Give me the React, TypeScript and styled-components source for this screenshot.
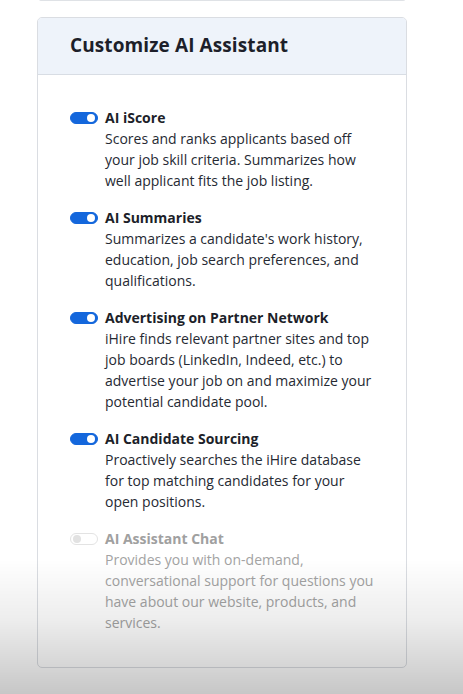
import React from "react"
import styled, { createGlobalStyle } from "styled-components"

const GlobalStyle = createGlobalStyle`
  html, body {
    margin: 0;
    padding: 0;
    background: #ffffff;
    font-family: "Open Sans", "Noto Sans", Arial, sans-serif;
  }
`

const Page = styled.div`
  width: 463px;
  height: 694px;
  overflow: hidden;
  padding-left: 37px;
  box-sizing: border-box;
`

const PrevCard = styled.div`
  width: 364px;
  height: 1px;
  margin-left: 2px;
  margin-top: -1px;
  border: 1px solid #dfe2e6;
  border-top: none;
  border-radius: 0 0 5px 5px;
`

const Card = styled.section`
  width: 370px;
  margin-top: 16px;
  box-sizing: border-box;
  border: 1px solid #dadde2;
  border-radius: 5px;
  overflow: hidden;
  background: #ffffff;
`

const CardHeader = styled.header`
  height: 57px;
  box-sizing: border-box;
  display: flex;
  align-items: center;
  padding: 0 32px 2px;
  background: #eef3fa;
  border-bottom: 1px solid #d8dde4;
`

const Title = styled.h2`
  margin: 0;
  font-size: 19px;
  font-weight: 700;
  color: #1d1f2a;
  letter-spacing: 0.1px;
`

const CardBody = styled.div`
  display: flex;
  flex-direction: column;
  gap: 16px;
  padding: 32px 31px 34px 32px;
`

const Option = styled.div`
  display: flex;
  align-items: flex-start;
  gap: 7px;
`

const ToggleTrack = styled.span<{ $on: boolean }>`
  flex: none;
  width: 28px;
  height: 12px;
  margin-top: 5px;
  border-radius: 7px;
  box-sizing: border-box;
  display: flex;
  align-items: center;
  justify-content: ${p => (p.$on ? "flex-end" : "flex-start")};
  padding: 0 2px;
  background: ${p => (p.$on ? "#1467dc" : "#ffffff")};
  border: 1px solid ${p => (p.$on ? "#1467dc" : "#e3e3e3")};
`

const ToggleKnob = styled.span<{ $on: boolean }>`
  width: 8px;
  height: 8px;
  border-radius: 50%;
  background: ${p => (p.$on ? "#ffffff" : "#e2e2e2")};
`

const OptionText = styled.div<{ $disabled: boolean }>`
  font-size: 14px;
  line-height: 21px;
  color: ${p => (p.$disabled ? "#a3a3a3" : "#262a33")};
`

const OptionTitle = styled.div<{ $disabled: boolean }>`
  font-weight: 700;
  color: ${p => (p.$disabled ? "#a0a0a0" : "#1d1f2a")};
`

const Shade = styled.div`
  position: fixed;
  left: 0;
  right: 0;
  bottom: 0;
  height: 135px;
  pointer-events: none;
  background: linear-gradient(
    to bottom,
    rgba(0, 0, 0, 0) 0%,
    rgba(0, 0, 0, 0.07) 45%,
    rgba(0, 0, 0, 0.22) 100%
  );
`

const options = [
  {
    title: "AI iScore",
    text: "Scores and ranks applicants based off your job skill criteria. Summarizes how well applicant fits the job listing.",
    on: true,
  },
  {
    title: "AI Summaries",
    text: "Summarizes a candidate's work history, education, job search preferences, and qualifications.",
    on: true,
  },
  {
    title: "Advertising on Partner Network",
    text: "iHire finds relevant partner sites and top job boards (LinkedIn, Indeed, etc.) to advertise your job on and maximize your potential candidate pool.",
    on: true,
  },
  {
    title: "AI Candidate Sourcing",
    text: "Proactively searches the iHire database for top matching candidates for your open positions.",
    on: true,
  },
  {
    title: "AI Assistant Chat",
    text: "Provides you with on-demand, conversational support for questions you have about our website, products, and services.",
    on: false,
  },
]

export default function App() {
  return (
    <>
      <GlobalStyle />
      <Page>
        <PrevCard />
        <Card>
          <CardHeader>
            <Title>Customize AI Assistant</Title>
          </CardHeader>
          <CardBody>
            {options.map(o => (
              <Option key={o.title}>
                <ToggleTrack $on={o.on}>
                  <ToggleKnob $on={o.on} />
                </ToggleTrack>
                <OptionText $disabled={!o.on}>
                  <OptionTitle $disabled={!o.on}>{o.title}</OptionTitle>
                  {o.text}
                </OptionText>
              </Option>
            ))}
          </CardBody>
        </Card>
      </Page>
      <Shade />
    </>
  )
}
